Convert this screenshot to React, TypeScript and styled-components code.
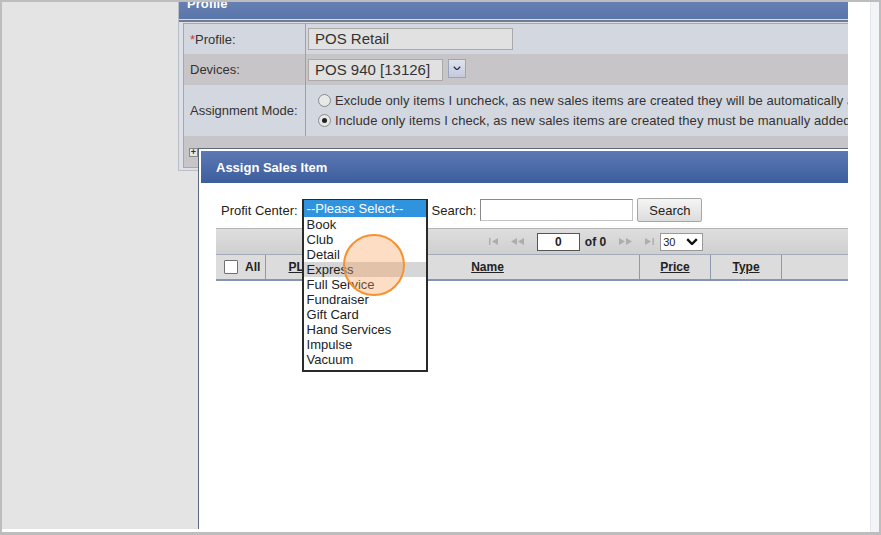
import * as React from 'react';
import styled, { createGlobalStyle } from 'styled-components';

const GlobalStyle = createGlobalStyle`
  html, body {
    margin: 0;
    padding: 0;
    background: #fff;
  }
  body {
    font-family: 'Liberation Sans', Arial, sans-serif;
  }
`;

const Frame = styled.div`
  width: 881px;
  height: 535px;
  box-sizing: border-box;
  border: 2px solid #bdbdbd;
  border-bottom-width: 3px;
  background: #fff;
  display: flex;
  font-family: 'Liberation Sans', Arial, sans-serif;
`;

const Viewport = styled.div`
  position: relative;
  width: 846px;
  height: 527px;
  flex-shrink: 0;
  overflow: hidden;
  background: #e4e4e4;
`;

const Gutter = styled.div`
  flex: 1;
`;

const ScrollTrack = styled.div`
  width: 8px;
  background: #f3f4f7;
  border-left: 1px solid #e6e7ec;
`;

/* ---------- dimmed page behind the dialog ---------- */

const Panel = styled.section`
  margin: -7px 0 0 176px;
  width: 670px;
  box-sizing: border-box;
  border-left: 1px solid #b8bdc8;
  border-bottom: 1px solid #b8bdc8;
  border-top-right-radius: 7px;
  overflow: hidden;
  background: #dde0e6;
`;

const PanelHeader = styled.div`
  height: 24px;
  line-height: 17px;
  padding-left: 8px;
  color: #fff;
  font-size: 13px;
  font-weight: bold;
  background: linear-gradient(#6a84b8, #5a75a9);
  border-bottom: 1px solid #d8dce4;
`;

const PanelBody = styled.div`
  border-top: 2px solid #747c8c;
  padding: 1px 0 2px 4px;
`;

const FieldTable = styled.div`
  border: 1px solid #a1a9b8;
  border-right: none;
`;

const FieldRow = styled.div<{ $h: number; $alt?: boolean }>`
  display: grid;
  grid-template-columns: 122px 1fr;
  height: ${(p) => p.$h}px;
  background: ${(p) => (p.$alt ? '#c8c5c8' : '#d3d7df')};
`;

const FieldLabel = styled.div`
  display: flex;
  align-items: center;
  padding-left: 6px;
  border-right: 1px solid #98a1b2;
  font-size: 13px;
  color: #333;
  white-space: nowrap;

  em {
    color: #d0392b;
    font-style: normal;
  }
`;

const FieldValue = styled.div`
  display: flex;
  align-items: center;
  padding-left: 2px;
  white-space: nowrap;
`;

const TextBox = styled.div<{ $w: number }>`
  width: ${(p) => p.$w}px;
  height: 22px;
  box-sizing: border-box;
  border: 1px solid #a9a9a9;
  background: #e1e1e1;
  font-size: 15px;
  line-height: 20px;
  padding-left: 6px;
  color: #333;
`;

const DropButton = styled.div`
  width: 18px;
  height: 19px;
  margin-left: 5px;
  margin-top: -3px;
  box-sizing: border-box;
  border: 1px solid #9aa5bb;
  background: linear-gradient(#dfe3ec, #c3cad9);
  display: flex;
  align-items: center;
  justify-content: center;
`;

const RadioGroup = styled.div`
  display: flex;
  flex-direction: column;
  gap: 5px;
  padding-left: 10px;
`;

const RadioLine = styled.label`
  display: flex;
  align-items: center;
  gap: 4px;
  font-size: 13px;
  letter-spacing: 0.08px;
  color: #333;
  height: 15px;
`;

const Radio = styled.span<{ $on?: boolean }>`
  width: 13px;
  height: 13px;
  box-sizing: border-box;
  border-radius: 50%;
  border: 1px solid #8a8a8a;
  background: #e8e8e8;
  display: flex;
  align-items: center;
  justify-content: center;

  &::after {
    content: '';
    width: 5px;
    height: 5px;
    border-radius: 50%;
    background: ${(p) => (p.$on ? '#222' : 'transparent')};
  }
`;

const ExpandRow = styled.div`
  grid-column: 1 / 3;
  display: flex;
  align-items: flex-start;
  padding: 12px 0 0 5px;
  gap: 5px;
  font-size: 13px;
  color: #333;
`;

const PlusBox = styled.span`
  width: 9px;
  height: 9px;
  box-sizing: border-box;
  border: 1px solid #888;
  background: #e6e6e6;
  font-size: 9px;
  line-height: 7px;
  text-align: center;
  font-weight: bold;
`;

/* ---------- dialog ---------- */

const Dialog = styled.div`
  position: absolute;
  left: 196px;
  top: 146px;
  width: 720px;
  height: 420px;
  box-sizing: border-box;
  border: 1px solid #59687a;
  padding: 2px;
  background: #fff;
  z-index: 2;
`;

const DialogHeader = styled.div`
  height: 32px;
  padding-left: 15px;
  display: flex;
  align-items: center;
  background: linear-gradient(#5b79b4, #3d5d9d);
  color: #fff;
  font-size: 13px;
  font-weight: bold;
`;

const DialogBody = styled.div`
  padding: 15px 0 0 15px;
`;

const FilterRow = styled.div`
  display: flex;
  align-items: center;
  height: 24px;
  padding-left: 5px;
  font-size: 13px;
  color: #222;
`;

const FilterLabel = styled.span<{ $gap: number }>`
  margin-right: ${(p) => p.$gap}px;
  white-space: nowrap;
`;

const SelectWrap = styled.div`
  position: relative;
  width: 126px;
  height: 22px;
  margin: 0 4px 0 4px;
`;

const OptionList = styled.div`
  position: absolute;
  top: 0;
  left: 0;
  width: 126px;
  box-sizing: border-box;
  border: 2px solid #2a2a2a;
  border-top-width: 1px;
  background: #fff;
  padding-bottom: 3px;
  z-index: 3;
`;

const Option = styled.div<{ $selected?: boolean; $hover?: boolean }>`
  height: ${(p) => (p.$selected ? 17 : 15)}px;
  line-height: ${(p) => (p.$selected ? 17 : 15)}px;
  padding: 0 3px;
  font-size: 13px;
  white-space: nowrap;
  color: ${(p) => (p.$selected ? '#fff' : '#222')};
  background: ${(p) => (p.$selected ? '#2f93dd' : p.$hover ? '#d6d6d6' : 'transparent')};
`;

const SearchBox = styled.div`
  width: 153px;
  height: 22px;
  box-sizing: border-box;
  border: 1px solid #8a8a8a;
  border-bottom-color: #c4c4c4;
  border-right-color: #c4c4c4;
  background: #fff;
  margin-right: 4px;
`;

const Button = styled.div`
  width: 65px;
  height: 24px;
  box-sizing: border-box;
  border: 1px solid #a6a6a6;
  border-radius: 2px;
  background: linear-gradient(#f5f5f5, #dcdcdc);
  display: flex;
  align-items: center;
  justify-content: center;
  font-size: 13px;
  color: #222;
`;

const Toolbar = styled.div`
  margin-top: 6px;
  width: 760px;
  height: 27px;
  box-sizing: border-box;
  border-top: 1px solid #b5b5b5;
  border-bottom: 1px solid #a3aab8;
  background: linear-gradient(#dedede, #cfcfcf);
  display: flex;
  align-items: center;
  justify-content: center;
  font-size: 12px;
  color: #222;
`;

const PagerIcon = styled.svg<{ $gap: number }>`
  fill: #adadad;
  margin-right: ${(p) => p.$gap}px;
`;

const PageInput = styled.div`
  width: 43px;
  height: 18px;
  box-sizing: border-box;
  border: 1px solid #555;
  background: #fff;
  text-align: center;
  line-height: 16px;
  font-weight: bold;
  margin-right: 5px;
`;

const PageCount = styled.span`
  font-weight: bold;
  margin-right: 13px;
`;

const SizeSelect = styled.div`
  width: 43px;
  height: 18px;
  box-sizing: border-box;
  border: 1px solid #999;
  background: #fff;
  display: flex;
  align-items: center;
  justify-content: space-between;
  padding: 0 4px 0 2px;
  font-size: 11px;
`;

const HeaderRow = styled.div`
  display: grid;
  grid-template-columns: 50px 70px 304px 71px 71px 1fr;
  width: 760px;
  height: 26px;
  box-sizing: border-box;
  background: #dcdcdc;
  border-bottom: 2px solid #8494b5;
`;

const HeadCell = styled.div<{ $left?: boolean }>`
  display: flex;
  align-items: center;
  justify-content: ${(p) => (p.$left ? 'flex-start' : 'center')};
  padding-left: ${(p) => (p.$left ? '8px' : '0')};
  gap: 7px;
  border-right: 1px solid #8d99ae;
  font-size: 12px;
  font-weight: bold;
  color: #222;

  u {
    text-decoration: underline;
  }
`;

const CheckBox = styled.span`
  width: 14px;
  height: 14px;
  box-sizing: border-box;
  border: 1px solid #707070;
  background: #fff;
  border-radius: 1px;
`;

const ClickMark = styled.div`
  position: absolute;
  left: 341px;
  top: 232px;
  width: 62px;
  height: 62px;
  box-sizing: border-box;
  border-radius: 50%;
  border: 2px solid #f5922f;
  background: rgba(250, 160, 90, 0.35);
  z-index: 5;
`;

const options = [
  'Book',
  'Club',
  'Detail',
  'Express',
  'Full Service',
  'Fundraiser',
  'Gift Card',
  'Hand Services',
  'Impulse',
  'Vacuum',
];

const Chevron = ({ size = 10, color = '#1f2f55', stroke = 2 }) => (
  <svg width={size} height={size * 0.6} viewBox="0 0 10 6">
    <path d="M1 1 L5 5 L9 1" fill="none" stroke={color} strokeWidth={stroke} />
  </svg>
);

const App = () => (
  <>
    <GlobalStyle />
    <Frame>
      <Viewport>
        <Panel>
          <PanelHeader>Profile</PanelHeader>
          <PanelBody>
            <FieldTable>
              <FieldRow $h={30}>
                <FieldLabel>
                  <em>*</em>Profile:
                </FieldLabel>
                <FieldValue>
                  <TextBox $w={205}>POS Retail</TextBox>
                </FieldValue>
              </FieldRow>
              <FieldRow $h={31} $alt>
                <FieldLabel>Devices:</FieldLabel>
                <FieldValue>
                  <TextBox $w={135}>POS 940 [13126]</TextBox>
                  <DropButton>
                    <Chevron size={8} stroke={1.6} />
                  </DropButton>
                </FieldValue>
              </FieldRow>
              <FieldRow $h={51}>
                <FieldLabel>Assignment Mode:</FieldLabel>
                <FieldValue>
                  <RadioGroup>
                    <RadioLine>
                      <Radio />
                      Exclude only items I uncheck, as new sales items are created they will be automatically added
                    </RadioLine>
                    <RadioLine>
                      <Radio $on />
                      Include only items I check, as new sales items are created they must be manually added
                    </RadioLine>
                  </RadioGroup>
                </FieldValue>
              </FieldRow>
              <FieldRow $h={31} $alt>
                <ExpandRow>
                  <PlusBox>+</PlusBox>
                  Assign Sales Items
                </ExpandRow>
              </FieldRow>
            </FieldTable>
          </PanelBody>
        </Panel>

        <Dialog>
          <DialogHeader>Assign Sales Item</DialogHeader>
          <DialogBody>
            <FilterRow>
              <FilterLabel $gap={0}>Profit Center:</FilterLabel>
              <SelectWrap>
                <OptionList>
                  <Option $selected>--Please Select--</Option>
                  {options.map((o) => (
                    <Option key={o} $hover={o === 'Express'}>
                      {o}
                    </Option>
                  ))}
                </OptionList>
              </SelectWrap>
              <FilterLabel $gap={4}>Search:</FilterLabel>
              <SearchBox />
              <Button>Search</Button>
            </FilterRow>

            <Toolbar>
              <PagerIcon $gap={12} width="9" height="7" viewBox="0 0 9 7">
                <rect x="0" y="0" width="1.4" height="7" />
                <path d="M9 0 L3 3.5 L9 7 Z" />
              </PagerIcon>
              <PagerIcon $gap={13} width="14" height="7" viewBox="0 0 14 7">
                <path d="M7 0 L1 3.5 L7 7 Z M14 0 L8 3.5 L14 7 Z" />
              </PagerIcon>
              <PageInput>0</PageInput>
              <PageCount>of 0</PageCount>
              <PagerIcon $gap={9} width="14" height="7" viewBox="0 0 14 7">
                <path d="M0 0 L6 3.5 L0 7 Z M7 0 L13 3.5 L7 7 Z" />
              </PagerIcon>
              <PagerIcon $gap={5} width="13" height="7" viewBox="0 0 13 7">
                <path d="M3 0 L9 3.5 L3 7 Z" />
                <rect x="10.5" y="0" width="1.4" height="7" />
              </PagerIcon>
              <SizeSelect>
                30
                <Chevron size={12} color="#111" stroke={2} />
              </SizeSelect>
            </Toolbar>

            <HeaderRow>
              <HeadCell $left>
                <CheckBox />
                All
              </HeadCell>
              <HeadCell>
                <u>PLU</u>
              </HeadCell>
              <HeadCell>
                <u>Name</u>
              </HeadCell>
              <HeadCell>
                <u>Price</u>
              </HeadCell>
              <HeadCell>
                <u>Type</u>
              </HeadCell>
              <HeadCell />
            </HeaderRow>
          </DialogBody>
        </Dialog>

        <ClickMark />
      </Viewport>
      <Gutter />
      <ScrollTrack />
    </Frame>
  </>
);

export default App;
